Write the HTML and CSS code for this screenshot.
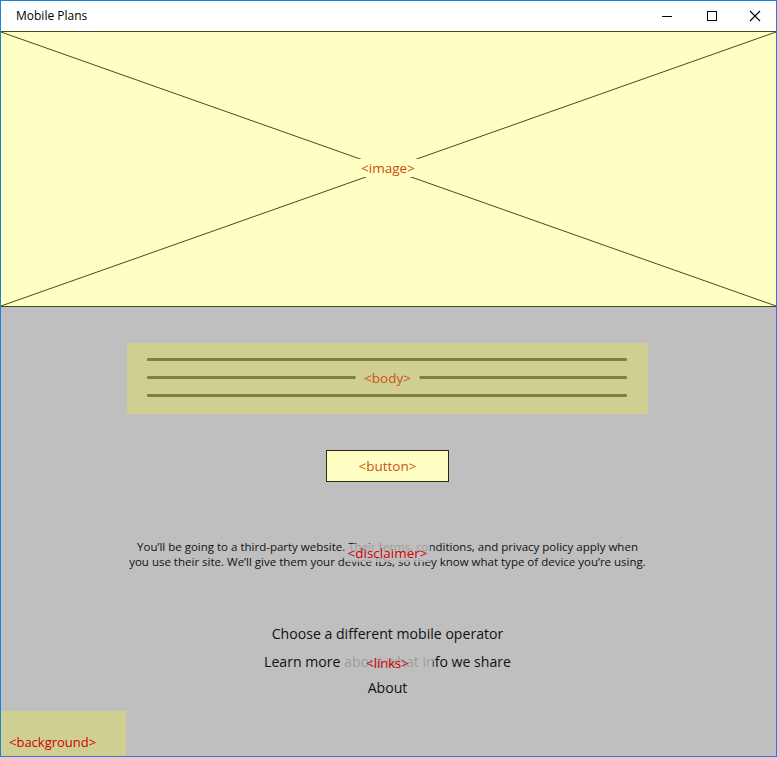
FILE: index.html
```html
<!DOCTYPE html>
<html lang="en">
<head>
<meta charset="utf-8">
<title>Mobile Plans</title>
<link rel="stylesheet" href="styles.css">
</head>
<body>
<div class="window">
  <header class="titlebar">
    <span class="title">Mobile Plans</span>
    <div class="controls">
      <span class="ctl"><svg width="12" height="12" viewBox="0 0 12 12"><path d="M1 6.5H11" stroke="#000" stroke-width="1"/></svg></span>
      <span class="ctl"><svg width="12" height="12" viewBox="0 0 12 12"><rect x="1.5" y="1.5" width="9" height="9" fill="none" stroke="#000" stroke-width="1"/></svg></span>
      <span class="ctl ctl-close"><svg width="12" height="12" viewBox="0 0 12 12"><path d="M1 1L11 11M11 1L1 11" stroke="#000" stroke-width="1.1"/></svg></span>
    </div>
  </header>
  <section class="image">
    <svg class="cross" viewBox="0 0 100 100" preserveAspectRatio="none">
      <line x1="0" y1="0" x2="100" y2="100" vector-effect="non-scaling-stroke"/>
      <line x1="100" y1="0" x2="0" y2="100" vector-effect="non-scaling-stroke"/>
    </svg>
    <span class="tag tag-image">&lt;image&gt;</span>
  </section>
  <main class="content">
    <div class="bodybox">
      <div class="line"></div>
      <div class="line"></div>
      <div class="line"></div>
      <span class="tag tag-body">&lt;body&gt;</span>
    </div>
    <div class="button"><span class="tag-btn">&lt;button&gt;</span></div>
    <div class="disclaimer">
      <p>You’ll be going to a third-party website. Their terms, conditions, and privacy policy apply when<br>you use their site. We’ll give them your device IDs, so they know what type of device you’re using.</p>
      <span class="tag tag-red">&lt;disclaimer&gt;</span>
    </div>
    <div class="links">
      <a>Choose a different mobile operator</a>
      <a>Learn more about what info we share</a>
      <a>About</a>
      <span class="tag tag-red tag-links">&lt;links&gt;</span>
    </div>
    <div class="bg-tag"><span class="tag-bg">&lt;background&gt;</span></div>
  </main>
</div>
</body>
</html>
```
FILE: styles.css
```css
* { box-sizing: border-box; }
html, body { margin: 0; padding: 0; }
body {
  width: 777px;
  height: 757px;
  font-family: "Open Sans", "Noto Sans", sans-serif;
  overflow: hidden;
}
.window {
  width: 777px;
  height: 757px;
  border: 1px solid #1883d7;
  display: flex;
  flex-direction: column;
  background: #bfbfbf;
}
.titlebar {
  height: 30px;
  background: #fff;
  display: flex;
  align-items: center;
  justify-content: space-between;
  flex: none;
}
.title {
  font-size: 12px;
  color: #000;
  padding-left: 15px;
  margin-top: -1px;
}
.controls { display: flex; height: 100%; }
.ctl {
  width: 45px;
  height: 30px;
  display: flex;
  align-items: center;
  justify-content: center;
}
.ctl-close { width: 42px; }
.ctl svg { display: block; }
.image {
  height: 276px;
  flex: none;
  background: #ffffc4;
  border-top: 1px solid #4a4a1e;
  border-bottom: 1px solid #4a4a1e;
  position: relative;
  display: flex;
  align-items: center;
  justify-content: center;
}
.cross {
  position: absolute;
  inset: 0;
  width: 100%;
  height: 100%;
}
.cross line { stroke: #4a4a1e; stroke-width: 1; }
.tag {
  position: relative;
  font-family: "Open Sans", "Noto Sans", sans-serif;
  font-size: 13.5px;
  line-height: 18px;
}
.tag-image {
  background: #ffffc4;
  color: #cc4a0c;
  padding: 0 6px;
  margin-top: -2px;
  margin-right: 1px;
}
.content {
  flex: 1;
  display: flex;
  flex-direction: column;
  align-items: center;
  position: relative;
  padding-right: 2px;
}
.bodybox {
  margin-top: 36px;
  width: 521px;
  height: 71px;
  background: #cfcf91;
  padding: 15px 21px 0 20px;
  position: relative;
  display: flex;
  flex-direction: column;
  gap: 15.5px;
}
.line {
  height: 2.5px;
  background: #7f7f3f;
  border-radius: 1px;
}
.tag-body {
  position: absolute;
  left: 50%;
  top: 26px;
  transform: translateX(-50%);
  background: #cfcf91;
  color: #d0501a;
  padding: 0 9px;
}
.button {
  margin-top: 36px;
  width: 123px;
  height: 32px;
  background: #ffffc4;
  border: 1px solid #2a2a10;
  display: flex;
  align-items: center;
  justify-content: center;
}
.tag-btn {
  font-size: 13.5px;
  color: #d0501a;
}
.disclaimer {
  margin-top: 57px;
  position: relative;
  text-align: center;
}
.disclaimer p {
  margin: 0;
  font-size: 11.5px;
  line-height: 15px;
  color: #111;
}
.tag-red {
  color: #d00000;
  background: rgba(191,191,191,0.8);
}
.disclaimer .tag {
  position: absolute;
  left: 50%;
  top: 5px;
  transform: translateX(-50%);
  padding: 0 3px;
}
.links {
  margin-top: 51px;
  display: flex;
  flex-direction: column;
  align-items: center;
  position: relative;
}
.links a {
  font-size: 14.1px;
  line-height: 27px;
  color: #111;
}
.links a:nth-child(2) { margin-top: 1px; }
.links a:nth-child(3) { margin-top: -1px; }
.links .tag {
  position: absolute;
  left: 50%;
  top: 34px;
  transform: translateX(-50%);
  padding: 0 24px;
  font-size: 13px;
}
.bg-tag {
  position: absolute;
  left: 0;
  bottom: 0;
  width: 125px;
  height: 45px;
  background: #cfcf91;
  display: flex;
  align-items: flex-end;
  padding: 0 0 5px 8px;
}
.tag-bg {
  font-size: 13px;
  color: #d00000;
}
```
